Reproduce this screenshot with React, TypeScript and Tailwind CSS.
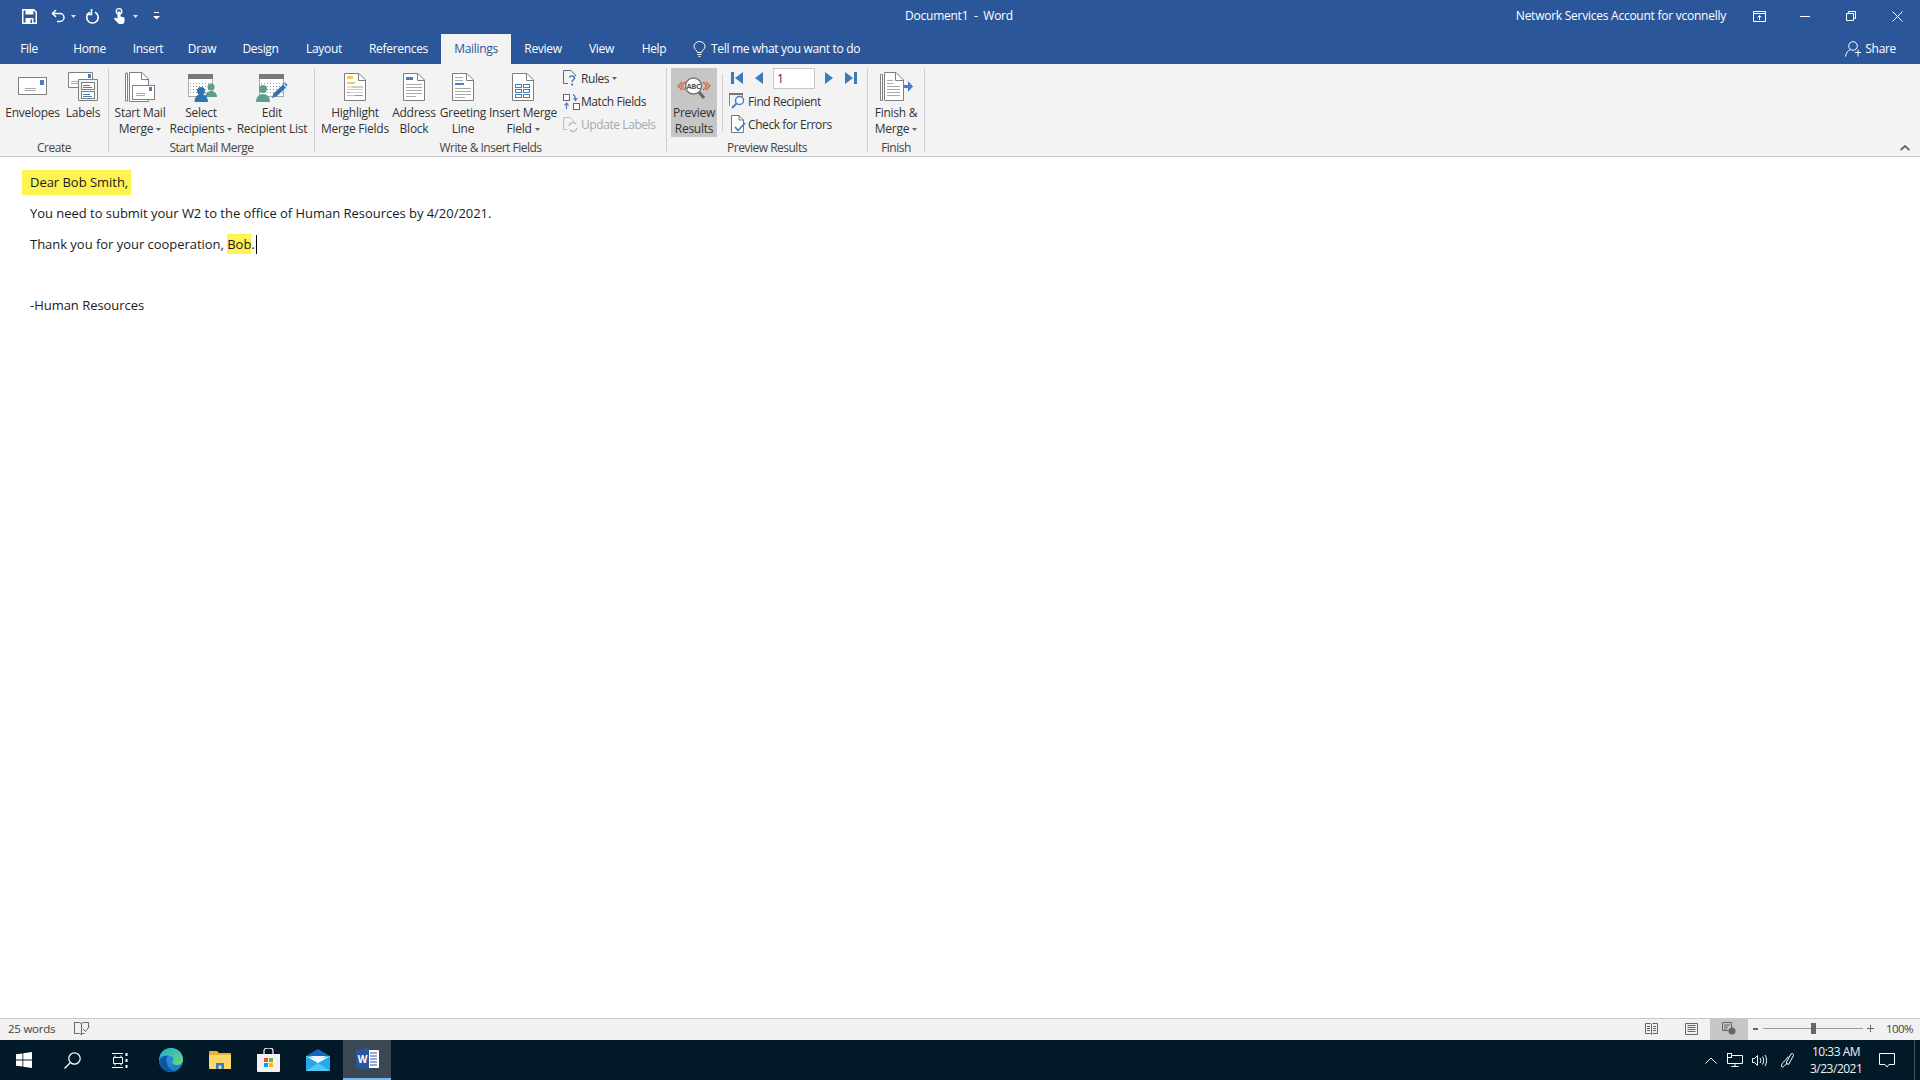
import type { ReactNode } from "react";

const gray = "#7f7f7f";
const blue = "#4a7fbb";

function Caret({ color = "#666", cls = "ml-[3px]" }: { color?: string; cls?: string }) {
  return (
    <svg width="5" height="3" viewBox="0 0 5 3" className={`inline-block align-middle ${cls}`}>
      <path d="M0 0h5L2.500 3z" fill={color} />
    </svg>
  );
}

function Doc({ children, fill = "#fff" }: { children?: ReactNode; fill?: string }) {
  return (
    <svg width="22" height="28" viewBox="0 0 22 28">
      <path d="M.5.5H15L21.500 7v20.500H.5z" fill={fill} stroke={gray} />
      <path d="M14.500.5V7.500H21.500" fill="none" stroke={gray} />
      {children}
    </svg>
  );
}

function BigButton({
  w,
  icon,
  lines,
  caret,
  active,
}: {
  w: string;
  icon: ReactNode;
  lines: string[];
  caret?: boolean;
  active?: boolean;
}) {
  return (
    <div className={`${w} h-[69px] shrink-0 flex flex-col items-center ${active ? "bg-[#c6c6c6]" : ""}`}>
      <div className="h-[37px] shrink-0 flex items-center justify-center">{icon}</div>
      {lines.map((l, i) => (
        <div key={l} className="leading-[15.5px] whitespace-nowrap text-center">
          {l}
          {caret && i === lines.length - 1 ? <Caret /> : null}
        </div>
      ))}
    </div>
  );
}

function Group({ w, label, children }: { w: string; label: string; children: ReactNode }) {
  return (
    <div className={`${w} shrink-0 h-[84px] mt-1 border-r border-[#d0d0d0] flex flex-col`}>
      <div className="h-[72px] flex shrink-0">{children}</div>
      <div className="h-[12px] leading-[16px] text-center text-[#444] tracking-[-0.5px]">{label}</div>
    </div>
  );
}

function SmallRow({
  icon,
  text,
  caret,
  dim,
  col = "w-[18px]",
}: {
  icon: ReactNode;
  text: string;
  caret?: boolean;
  dim?: boolean;
  col?: string;
}) {
  return (
    <div className={`h-[23px] flex items-center whitespace-nowrap tracking-[-0.42px] ${dim ? "text-[#a8a8a8]" : ""}`}>
      <div className={`${col} shrink-0 flex items-center justify-start`}>{icon}</div>
      {text}
      {caret ? <Caret /> : null}
    </div>
  );
}

const EnvelopeIcon = (
  <svg width="30" height="19" viewBox="0 0 30 19">
    <rect x=".5" y=".5" width="28" height="17" fill="#fff" stroke={gray} />
    <rect x="22" y="3" width="4" height="5" fill={blue} />
    <path d="M7 11.500h11M7 13.500h11" stroke="#aaa" />
  </svg>
);

const LabelsIcon = (
  <svg width="31" height="30" viewBox="0 0 31 30">
    <path d="M.5.5h24v15H.5z" fill="#fff" stroke={gray} />
    <rect x="20" y="2" width="3" height="4" fill={blue} />
    <path d="M3 9.500h11M3 11.500h11" stroke="#aaa" />
    <path d="M10.500 7.500h19v21h-19z" fill="#f3f3f3" stroke={gray} />
    <rect x="13.500" y="10.500" width="13" height="7" fill="#fff" stroke={gray} />
    <rect x="13.500" y="19.500" width="13" height="7" fill="#fff" stroke={gray} />
    <path d="M15 13.500h7M15 15.500h9" stroke={blue} />
    <path d="M15 22.500h7M15 24.500h9" stroke={blue} />
  </svg>
);

const StartMergeIcon = (
  <svg width="30" height="30" viewBox="0 0 30 30">
    <path d="M.5 1h2v28h-2z" fill="#fff" stroke={gray} />
    <path d="M4.500.5H17L23.500 7v22.500H4.500z" fill="#fff" stroke={gray} />
    <path d="M16.500.5V7.500H23.500" fill="none" stroke={gray} />
    <rect x="7.500" y="13.500" width="22" height="14" fill="#fff" stroke={gray} />
    <rect x="24" y="15" width="3" height="4" fill={blue} />
    <path d="M11 21.500h9M11 23.500h9" stroke="#aaa" />
  </svg>
);

function calendarParts(x0: number) {
  const dots = [];
  for (let y = 9; y < 21; y += 3) for (let x = 2; x < 24; x += 3) dots.push(<rect key={`${x}-${y}`} x={x + x0} y={y} width="1" height="1" fill="#999" />);
  return (
    <>
      <rect x={x0 + 0.5} y=".5" width="24" height="22" fill="#fff" stroke="#aaa" />
      <rect x={x0} y="0" width="25" height="5" fill="#7a7a7a" />
      {dots}
    </>
  );
}

const SelectIcon = (
  <svg width="29" height="28" viewBox="0 0 29 28" className="mt-[2px] ml-[2px]">
    {calendarParts(0)}
    <circle cx="23" cy="13" r="3.500" fill="#5f9e8f" />
    <path d="M17 23c0-4 3-6 6-6s6 2 6 6z" fill="#5f9e8f" />
    <circle cx="13" cy="17" r="4" fill="#2e74b5" />
    <path d="M6.500 28c0-5 3-8 6.500-8s7 3 7 8z" fill="#2e74b5" />
  </svg>
);

const EditIcon = (
  <svg width="32" height="28" viewBox="0 0 32 28" className="mt-[2px]">
    {calendarParts(3)}
    <circle cx="7" cy="15" r="4" fill="#5f9e8f" />
    <path d="M0 28c0-5 3-8 7-8s7 3 7 8z" fill="#5f9e8f" />
    <path d="M16 24l1.500-4.500 9.500-9 3 3-9.500 9z" fill="#2e74b5" />
    <path d="M28 9.500l1-1 2.500 2.500-1 1.500z" fill="#2e74b5" />
  </svg>
);

const HighlightIcon = (
  <Doc>
    <path d="M3 3h6v3H3z" fill="#f0c76a" />
    <path d="M3 9h8v2H3z" fill="#f0c76a" />
    <path d="M3 14h5" stroke="#f0c76a" strokeWidth="1" />
    <path d="M8 14h11" stroke="#999" />
    <path d="M3 16.500h16" stroke="#f0c76a" />
    <path d="M3 19.500h3" stroke="#999" />
    <path d="M6 19.500h13" stroke="#ccc" />
    <path d="M3 22.500h8" stroke="#f0c76a" />
    <path d="M11 22.500h8" stroke="#999" />
  </Doc>
);

const AddressIcon = (
  <Doc>
    <rect x="3" y="4" width="7" height="3" fill={blue} />
    <path d="M3 11.500h16M3 14.500h16M3 17.500h16M3 20.500h16M3 23.500h10" stroke="#aaa" />
  </Doc>
);

const GreetingIcon = (
  <Doc>
    <path d="M3 4.500h8M3 7.500h8" stroke="#aaa" />
    <rect x="3" y="10" width="9" height="2" fill={blue} />
    <path d="M3 15.500h16M3 18.500h16M3 21.500h16M3 24.500h10" stroke="#aaa" />
  </Doc>
);

const InsertIcon = (
  <Doc>
    <g fill="#fff" stroke={blue}>
      <rect x="3.500" y="11.500" width="6" height="3" />
      <rect x="11.500" y="11.500" width="6" height="3" />
      <rect x="3.500" y="16.500" width="6" height="3" />
      <rect x="11.500" y="16.500" width="6" height="3" />
      <rect x="3.500" y="21.500" width="6" height="3" />
      <rect x="11.500" y="21.500" width="6" height="3" />
    </g>
  </Doc>
);

const RulesIcon = (
  <svg width="15" height="17" viewBox="0 0 15 17">
    <path d="M.5.5H8L12.500 5v1M.5.5v13H5" fill="none" stroke="#666" />
    <path d="M6.500 7.500c.5-2 5-2 5 .5 0 2-2.500 2-2.500 4" fill="none" stroke={blue} strokeWidth="1.600" />
    <rect x="8" y="13.500" width="2" height="2" fill={blue} />
  </svg>
);

const MatchIcon = (
  <svg width="17" height="16" viewBox="0 0 17 16">
    <rect x=".5" y=".5" width="6" height="6" fill="#fff" stroke="#666" />
    <rect x="10.500" y="9.500" width="6" height="6" fill="#fff" stroke="#666" />
    <path d="M10 .5c2 1 2.500 2.500 2.500 5M10.500 4l2 2.500L14.500 4" fill="none" stroke={blue} strokeWidth="1.200" />
    <path d="M3.500 15V9M1.500 11.500l2-2.500 2 2.500" fill="none" stroke={blue} strokeWidth="1.200" />
  </svg>
);

const UpdateIcon = (
  <svg width="16" height="16" viewBox="0 0 16 16">
    <path d="M.5.5H7L11 4.500M.5.500v12H4" fill="none" stroke="#bbb" />
    <path d="M6 9a4 4 0 0 1 7-2M14 11a4 4 0 0 1-7 2" fill="none" stroke="#bbb" strokeWidth="1.400" />
  </svg>
);

const PreviewIcon = (
  <svg width="34" height="24" viewBox="0 0 34 24">
    <path d="M5 7L1 11l4 4M8 7L4 11l4 4M29 7l4 4-4 4M26 7l4 4-4 4" fill="none" stroke="#d9603a" strokeWidth="1.200" />
    <path d="M21 16l6 7" stroke="#666" strokeWidth="3" />
    <circle cx="16.500" cy="11" r="8" fill="#fff" stroke="#777" strokeWidth="1.500" />
    <text x="16.500" y="14" fontSize="7.500" fontWeight="700" textAnchor="middle" fill="#555" fontFamily="Open Sans, sans-serif">ABC</text>
  </svg>
);

const FindIcon = (
  <svg width="17" height="17" viewBox="0 0 17 17">
    <path d="M.5 13V1.500h13V4" fill="none" stroke="#888" />
    <rect x="0" y="0" width="14" height="2" fill="#777" />
    <circle cx="10.500" cy="7.500" r="4" fill="#fff" stroke={blue} strokeWidth="1.500" />
    <path d="M7.500 10.500L3 15" stroke={blue} strokeWidth="2" />
  </svg>
);

const CheckIcon = (
  <svg width="15" height="19" viewBox="0 0 15 19">
    <path d="M.5.5H8L12.500 5v12.500H.5z" fill="#fff" stroke="#777" />
    <path d="M8 .5V5h4.500" fill="none" stroke="#777" />
    <path d="M4 12l3 3.500L14 8" fill="none" stroke={blue} strokeWidth="1.800" />
  </svg>
);

const FinishIcon = (
  <svg width="33" height="30" viewBox="0 0 33 30">
    <path d="M.5 2.500h2v26h-2z" fill="#fff" stroke={gray} />
    <path d="M4.500.5H16L23.500 8v20.500H4.500z" fill="#fff" stroke={gray} />
    <path d="M15.500.5V8.500H23.500" fill="none" stroke={gray} />
    <path d="M7 8.500h6M7 11.500h6M7 14.500h13M7 17.500h13M7 20.500h13M7 23.500h13" stroke="#aaa" />
    <path d="M23 13h5V9l5 5.500-5 5.500v-4h-5z" fill={blue} />
  </svg>
);

function TitleBar() {
  return (
    <div className="h-8 flex items-center text-white">
      <div className="w-[640px] shrink-0 flex items-center">
        <svg width="15" height="15" viewBox="0 0 15 15" className="ml-[22px]">
          <path d="M.75.75h11L14.250 3v11.250H.75z" fill="none" stroke="#fff" strokeWidth="1.500" />
          <rect x="3.500" y="1" width="8" height="4.500" fill="#fff" />
          <rect x="3.500" y="9" width="8" height="5" fill="#fff" />
          <rect x="8.500" y="10.500" width="1.500" height="3.500" fill="#2b579a" />
        </svg>
        <svg width="15" height="14" viewBox="0 0 15 14" className="ml-[14px]">
          <path d="M5 1L1.500 4.500 5 8" fill="none" stroke="#fff" strokeWidth="1.500" />
          <path d="M2 4.500h7a4 4 0 0 1 0 8H6" fill="none" stroke="#fff" strokeWidth="1.500" />
        </svg>
        <Caret color="#dfe6f0" cls="ml-[5px]" />
        <svg width="14" height="15" viewBox="0 0 14 15" className="ml-[10px]">
          <path d="M9 3.200A5.700 5.700 0 1 1 4 3.200" fill="none" stroke="#fff" strokeWidth="1.600" />
          <path d="M5 0v5.500H0" fill="none" stroke="#fff" strokeWidth="1.600" transform="translate(.5 0)" />
        </svg>
        <svg width="13" height="16" viewBox="0 0 13 16" className="ml-[13px]">
          <circle cx="6" cy="3.500" r="2.800" fill="none" stroke="#fff" strokeWidth="1.300" />
          <path d="M4.500 3.500h3v5l4 1V14l-1.500 2H6L1 11l1-1.500 2.500 1z" fill="#fff" />
        </svg>
        <Caret color="#dfe6f0" cls="ml-[7px]" />
        <svg width="7" height="8" viewBox="0 0 7 8" className="ml-[15px]">
          <path d="M1 .5h5" stroke="#fff" />
          <path d="M0 4h7L3.500 7.500z" fill="#fff" />
        </svg>
      </div>
      <div className="w-[638px] shrink-0 text-center">Document1&nbsp; -&nbsp; Word</div>
      <div className="flex-1 flex items-center justify-end">
        <span className="mr-[10px] whitespace-nowrap">Network Services Account for vconnelly</span>
        <div className="w-[46px] flex justify-center">
          <svg width="13" height="11" viewBox="0 0 13 11">
            <path d="M.5.5h12v10H.5zM.5 2.500h12" fill="none" stroke="#fff" />
            <path d="M6.500 9V4.500M4.500 6.500l2-2 2 2" fill="none" stroke="#fff" />
          </svg>
        </div>
        <div className="w-[46px] flex justify-center">
          <svg width="10" height="1" viewBox="0 0 10 1"><path d="M0 .5h10" stroke="#fff" /></svg>
        </div>
        <div className="w-[46px] flex justify-center">
          <svg width="10" height="10" viewBox="0 0 10 10">
            <path d="M.5 2.500h7v7h-7zM2.500 2.500v-2h7v7h-2" fill="none" stroke="#fff" />
          </svg>
        </div>
        <div className="w-[46px] flex justify-center">
          <svg width="11" height="11" viewBox="0 0 11 11"><path d="M.5.5l10 10M10.500.5l-10 10" stroke="#fff" /></svg>
        </div>
      </div>
    </div>
  );
}

const tabs: [string, string][] = [
  ["File", "w-[58px]"],
  ["Home", "w-[63px]"],
  ["Insert", "w-[54px]"],
  ["Draw", "w-[54px]"],
  ["Design", "w-[63px]"],
  ["Layout", "w-[64px]"],
  ["References", "w-[85px]"],
  ["Mailings", "w-[70px]"],
  ["Review", "w-[64px]"],
  ["View", "w-[53px]"],
  ["Help", "w-[52px]"],
];

function TabRow() {
  return (
    <div className="h-8 flex items-end text-white tracking-[-0.32px]">
      {tabs.map(([t, w]) =>
        t === "Mailings" ? (
          <div key={t} className={`${w} h-[30px] flex items-center justify-center bg-[#f3f3f3] text-[#2b579a]`}>
            {t}
          </div>
        ) : (
          <div key={t} className={`${w} h-[30px] flex items-center justify-center`}>
            {t}
          </div>
        ),
      )}
      <div className="h-[30px] flex items-center ml-[13px]">
        <svg width="13" height="16" viewBox="0 0 13 16" className="mr-[5px]">
          <path d="M4.500 11.500C4 9 1 8.500 1 5.500a5.500 5 0 0 1 11 0c0 3-3 3.500-3.500 6zM4.500 13.500h4M5.500 15.500h2" fill="none" stroke="#fff" />
        </svg>
        Tell me what you want to do
      </div>
      <div className="flex-1 h-[30px] flex items-center justify-end pr-[24px]">
        <svg width="16" height="16" viewBox="0 0 16 16" className="mr-[4px]">
          <circle cx="8" cy="5" r="4.300" fill="none" stroke="#fff" />
          <path d="M.5 15.500c.5-4 2.500-6 5-6.800M10 11.500h6M13 8.500v7" fill="none" stroke="#fff" />
        </svg>
        Share
      </div>
    </div>
  );
}

function Ribbon() {
  return (
    <div className="h-[93px] bg-[#f3f3f3] border-b border-[#c8c8c8] flex text-[#333] relative">
      <Group w="w-[109px]" label="Create">
        <div className="w-1" />
        <BigButton w="w-[57px]" icon={EnvelopeIcon} lines={["Envelopes"]} />
        <BigButton w="w-[44px]" icon={LabelsIcon} lines={["Labels"]} />
      </Group>
      <Group w="w-[206px]" label="Start Mail Merge">
        <div className="w-[3px]" />
        <BigButton w="w-[56px]" icon={StartMergeIcon} lines={["Start Mail", "Merge"]} caret />
        <BigButton w="w-[66px]" icon={SelectIcon} lines={["Select", "Recipients"]} caret />
        <BigButton w="w-[76px]" icon={EditIcon} lines={["Edit", "Recipient List"]} />
      </Group>
      <Group w="w-[352px]" label="Write & Insert Fields">
        <div className="w-[5px]" />
        <BigButton w="w-[70px]" icon={HighlightIcon} lines={["Highlight", "Merge Fields"]} />
        <BigButton w="w-[48px]" icon={AddressIcon} lines={["Address", "Block"]} />
        <BigButton w="w-[50px]" icon={GreetingIcon} lines={["Greeting", "Line"]} />
        <BigButton w="w-[70px]" icon={InsertIcon} lines={["Insert Merge", "Field"]} caret />
        <div className="ml-[5px] -mt-px flex flex-col">
          <SmallRow icon={RulesIcon} text="Rules" caret />
          <SmallRow icon={MatchIcon} text="Match Fields" />
          <SmallRow icon={UpdateIcon} text="Update Labels" dim />
        </div>
      </Group>
      <Group w="w-[201px]" label="Preview Results">
        <div className="w-[4px]" />
        <BigButton w="w-[46px]" icon={PreviewIcon} lines={["Preview", "Results"]} active />
        <div className="ml-[5px] mt-[6px] w-px h-[58px] bg-[#d0d0d0]" />
        <div className="ml-[6px] -mt-px flex flex-col">
          <div className="h-[23px] flex items-center">
            <svg width="12" height="12" viewBox="0 0 12 12" className="ml-[2px] -mt-[1px]">
              <path d="M0 0h3v12H0zM12 0v12L4 6z" fill="#3d7ab8" />
            </svg>
            <svg width="8" height="12" viewBox="0 0 8 12" className="ml-[12px] -mt-[1px]">
              <path d="M8 0v12L0 6z" fill="#3d7ab8" />
            </svg>
            <div className="ml-[10px] w-[42px] h-[21px] -mt-[1px] bg-white border border-[#c8c8c8] text-[#333] pl-[3px] leading-[19px]">1</div>
            <svg width="8" height="12" viewBox="0 0 8 12" className="ml-[10px] -mt-[1px]">
              <path d="M0 0v12L8 6z" fill="#3d7ab8" />
            </svg>
            <svg width="12" height="12" viewBox="0 0 12 12" className="ml-[12px] -mt-[1px]">
              <path d="M12 0H9v12h3zM0 0v12l8-6z" fill="#3d7ab8" />
            </svg>
          </div>
          <SmallRow col="w-[19px]" icon={FindIcon} text="Find Recipient" />
          <SmallRow col="w-[19px]" icon={<div className="ml-[2px]">{CheckIcon}</div>} text="Check for Errors" />
        </div>
      </Group>
      <Group w="w-[57px]" label="Finish">
        <BigButton w="w-[56px]" icon={FinishIcon} lines={["Finish &", "Merge"]} caret />
      </Group>
      <svg width="10" height="6" viewBox="0 0 10 6" className="absolute right-[10px] bottom-[5px]">
        <path d="M.5 5L5 1l4.500 4" fill="none" stroke="#666" strokeWidth="1.800" />
      </svg>
    </div>
  );
}

function Page() {
  return (
    <div className="flex-1 bg-white pl-[30px] pt-[10.5px] text-[#1a1a1a] text-[13px] tracking-[-0.03px]">
      <div className="h-[30.75px] flex items-center">
        <span className="h-[25px] leading-[25px] bg-[#fff253] -ml-[8px] pl-[8px] pr-[3px]">Dear Bob Smith,</span>
      </div>
      <div className="h-[30.75px] flex items-center">You need to submit your W2 to the office of Human Resources by 4/20/2021.</div>
      <div className="h-[30.75px] flex items-center">
        Thank you for your cooperation,&nbsp;
        <span className="h-5 leading-5 bg-[#fff253]">Bob</span>
        <span>.</span>
        <span className="w-px h-[19px] bg-black ml-[1px]" />
      </div>
      <div className="h-[30.75px]" />
      <div className="h-[30.75px] flex items-center">-Human Resources</div>
    </div>
  );
}

function StatusBar() {
  return (
    <div className="h-[22px] bg-[#f1f1f1] border-t border-[#c8c8c8] flex items-center text-[#444] text-[11.5px]">
      <div className="flex items-center pb-[2px] h-full">
        <span className="ml-2 w-[66px]">25 words</span>
        <svg width="16" height="13" viewBox="0 0 16 13">
          <path d="M.5.5h5l2 1v11l-2-1h-5zM7.500 1.500l2-1h5v5M7.500 12.500l1-1h2" fill="none" stroke="#666" />
          <path d="M9 7l2.500 2.500L15.500 4" fill="none" stroke="#666" />
        </svg>
      </div>
      <div className="flex-1" />
      <div className="flex items-center pb-[2px] h-full">
        <svg width="13" height="12" viewBox="0 0 13 12" className="mr-[27px]">
          <path d="M.5.5h5l1 1 1-1h5v10h-5l-1 1-1-1h-5zM6.500 1.500v9M2 3.500h3M2 5.500h3M2 7.500h3M8 3.500h3M8 5.500h3M8 7.500h3" fill="none" stroke="#666" />
        </svg>
        <svg width="13" height="12" viewBox="0 0 13 12" className="mr-[12px]">
          <path d="M.5.5h12v11H.5zM2.500 2.500h8M2.500 4.500h8M2.500 6.500h8M2.500 8.500h8" fill="none" stroke="#666" />
        </svg>
      </div>
      <div className="w-[38px] h-full bg-[#c6c6c6] flex items-center justify-center pb-[2px]">
        <svg width="14" height="13" viewBox="0 0 14 13">
          <path d="M.5.5h9v8H.5zM2 3h6M2 5h4M2 7h3" fill="none" stroke="#666" />
          <circle cx="10" cy="9" r="3.500" fill="#666" />
        </svg>
      </div>
      <div className="flex items-center pb-[2px] h-full">
        <div className="w-[5px] h-[2px] bg-[#666] ml-[5px]" />
        <div className="w-[100px] h-px bg-[#999] ml-[5px] relative">
          <div className="absolute left-[48px] -top-[5px] w-[5px] h-[11px] bg-[#666]" />
        </div>
        <svg width="7" height="7" viewBox="0 0 7 7" className="ml-[4px]">
          <path d="M0 3.500h7M3.500 0v7" stroke="#666" />
        </svg>
        <span className="ml-[12px] mr-2 w-[26px] tracking-[-0.6px] whitespace-nowrap">100%</span>
      </div>
    </div>
  );
}

function Slot({ children, w = "w-12", cls = "" }: { children: ReactNode; w?: string; cls?: string }) {
  return <div className={`${w} h-full shrink-0 flex items-center justify-center ${cls}`}>{children}</div>;
}

function Taskbar() {
  return (
    <div className="h-10 bg-[#021a28] flex items-center text-white text-[12px]">
      <Slot>
        <svg width="16" height="16" viewBox="0 0 16 16" fill="#fff">
          <path d="M0 2.300l6.500-.9v6.200H0zM7.300 1.300L16 0v7.600H7.300zM0 8.400h6.500v6.200L0 13.700zM7.300 8.400H16V16l-8.700-1.300z" />
        </svg>
      </Slot>
      <Slot>
        <svg width="17" height="17" viewBox="0 0 17 17">
          <circle cx="10.500" cy="6.500" r="5.700" fill="none" stroke="#fff" strokeWidth="1.200" />
          <path d="M6.500 10.500L.5 16.500" stroke="#fff" strokeWidth="1.200" />
        </svg>
      </Slot>
      <Slot>
        <svg width="16" height="15" viewBox="0 0 16 15">
          <path d="M0 .5h11M0 14.500h11M1.500 4.500h9v6h-9zM3 4.500v-2M9 4.500v-2M3 10.500v2M9 10.500v2" fill="none" stroke="#fff" />
          <rect x="13.500" y="0" width="2" height="3" fill="#fff" />
          <rect x="13.500" y="6" width="2" height="3" fill="#fff" />
          <rect x="13.500" y="12" width="2" height="3" fill="#fff" />
        </svg>
      </Slot>
      <Slot cls="ml-[3px]">
        <svg width="24" height="24" viewBox="0 0 24 24">
          <defs>
            <linearGradient id="edgeA" x1="0" y1="0" x2="1" y2="1">
              <stop offset="0" stopColor="#2ba6e0" />
              <stop offset="1" stopColor="#1a6fc0" />
            </linearGradient>
            <linearGradient id="edgeB" x1="0" y1="0" x2="1" y2="1">
              <stop offset="0" stopColor="#1fa9d8" />
              <stop offset="1" stopColor="#6fdc6f" />
            </linearGradient>
          </defs>
          <circle cx="12" cy="12" r="12" fill="url(#edgeA)" />
          <path d="M1 8C3 2 8 0 12 0c7 0 12 5 12 12 0 3-3 5-6 5-3 0-5-1.500-5-3 1-1 2-2 1-4-1-2-4-3-7-2-3 0-5 1-6 0z" fill="url(#edgeB)" />
          <path d="M8 15c0 4 4 8 9 8-2 1-3 1-5 1C6 24 1 20 0 14c1-5 6-7 9-6-2 1-2 4-1 7z" fill="#10569e" />
        </svg>
      </Slot>
      <Slot cls="ml-px">
        <svg width="22" height="18" viewBox="0 0 22 18">
          <path d="M0 1a1 1 0 0 1 1-1h7l2 2h11a1 1 0 0 1 1 1v14a1 1 0 0 1-1 1H1z" fill="#e8b13a" />
          <path d="M0 4h22v13a1 1 0 0 1-1 1H1a1 1 0 0 1-1-1z" fill="#fcd668" />
          <path d="M7 18v-6h8v6h-2.500v-3.500h-3V18z" fill="#2e7fc9" />
        </svg>
      </Slot>
      <Slot>
        <svg width="23" height="24" viewBox="0 0 23 24">
          <path d="M7 6V3a3 3 0 0 1 3-3h3a3 3 0 0 1 3 3v3" fill="none" stroke="#e8e8e8" strokeWidth="1.300" />
          <path d="M0 6h23v17a1 1 0 0 1-1 1H1a1 1 0 0 1-1-1z" fill="#f2f2f2" />
          <rect x="7" y="10" width="4" height="4" fill="#f25022" />
          <rect x="12" y="10" width="4" height="4" fill="#7fba00" />
          <rect x="7" y="15" width="4" height="4" fill="#00a4ef" />
          <rect x="12" y="15" width="4" height="4" fill="#ffb900" />
        </svg>
      </Slot>
      <Slot cls="ml-[2px]">
        <svg width="24" height="22" viewBox="0 0 24 22">
          <path d="M0 7l12-7 12 7v15H0z" fill="#0f6cbd" />
          <path d="M0 7h24v15H0z" fill="#28a8ea" />
          <path d="M0 7l12 7 12-7-12 3.500z" fill="#fff" />
          <path d="M4 7h16l-8 5z" fill="#e8f4fb" />
          <path d="M0 22l12-8 12 8z" fill="#50c8f5" />
        </svg>
      </Slot>
      <Slot cls="ml-px bg-[#3a4854] border-b-2 border-[#76b9ed]">
        <svg width="23" height="22" viewBox="0 0 23 22">
          <path d="M10 2h12a1 1 0 0 1 1 1v16a1 1 0 0 1-1 1H10z" fill="#fff" />
          <path d="M14 5h7M14 8h7M14 11h7M14 14h7M14 17h7" stroke="#2b579a" />
          <path d="M0 2l13-2v22L0 20z" fill="#2b579a" />
          <text x="6.500" y="14.500" fontSize="10" fontWeight="700" textAnchor="middle" fill="#fff" fontFamily="Open Sans, sans-serif">W</text>
        </svg>
      </Slot>
      <div className="flex-1" />
      <svg width="12" height="7" viewBox="0 0 12 7" className="mr-[10px]">
        <path d="M.5 6.500L6 1l5.500 5.500" fill="none" stroke="#fff" />
      </svg>
      <svg width="16" height="14" viewBox="0 0 16 14" className="mr-[9px]">
        <path d="M4.500 2.500h11v8h-15v-6M8 10.500v3M4.500 13.500h7" fill="none" stroke="#fff" />
        <rect x=".5" y=".5" width="4" height="4" fill="#021a28" stroke="#fff" />
      </svg>
      <svg width="15" height="13" viewBox="0 0 15 13" className="mr-[13px]">
        <path d="M.5 4.500h2l3-3v10l-3-3h-2zM8 4c1 1.500 1 3.500 0 5M10.500 2.500c1.500 2 1.500 6 0 8M13 1c2 3 2 8 0 11" fill="none" stroke="#fff" />
      </svg>
      <svg width="15" height="16" viewBox="0 0 15 16" className="mr-[15px]">
        <path d="M6 11l5-9a1.500 1.500 0 0 1 2.500 1.500l-5 9zM8 4.500c-1 2-2 3-3.500 4.500-2 2-3 3.500-3 5 0 1 1 1.500 2 .5 1-1 2-2 4-3" fill="none" stroke="#fff" />
      </svg>
      <div className="w-[52px] text-center leading-[17px] whitespace-nowrap text-[#eef2f5] tracking-[-0.5px] -mt-px">
        <div>10:33 AM</div>
        <div>3/23/2021</div>
      </div>
      <svg width="16" height="15" viewBox="0 0 16 15" className="ml-[17px]">
        <path d="M.5.5h15v11H10l-2 2.500-2-2.500H.5z" fill="none" stroke="#fff" />
      </svg>
      <div className="w-px h-full bg-[#44525c] ml-[19px] mr-[5px]" />
    </div>
  );
}

export default function App() {
  return (
    <div className="w-[1920px] h-[1080px] flex flex-col overflow-hidden bg-[#2b579a] font-['Open_Sans',sans-serif] text-[12px] tracking-[-0.25px]">
      <TitleBar />
      <TabRow />
      <Ribbon />
      <Page />
      <StatusBar />
      <Taskbar />
    </div>
  );
}
